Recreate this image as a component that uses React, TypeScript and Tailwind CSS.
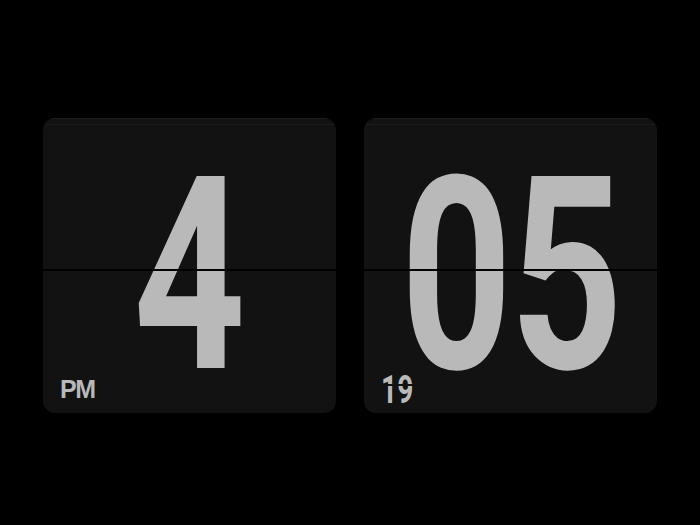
import React from 'react';

const digitFont = { fontFamily: 'Roboto, "DejaVu Sans", sans-serif' };

// each glyph sits in a box of its own width, squeezed to the condensed face
const Digit = ({ ch, box, squeeze }: { ch: string; box: string; squeeze: string }) => (
  <div className={`flex justify-center ${box}`}>
    <span
      className={`inline-block font-bold text-[270px] leading-none text-[#b9b9b9] origin-center ${squeeze}`}
      style={digitFont}
    >
      {ch}
    </span>
  </div>
);

const FlipCard = ({ children, label }: { children: React.ReactNode; label: React.ReactNode }) => {
  return (
    <div className="relative w-[293px] h-[295px] rounded-[12px] bg-[#121212] overflow-hidden flex items-center justify-center gap-[18px] pt-[21px]">
      {/* stacked leaves at the top edge */}
      <div className="absolute inset-x-0 top-0 h-[8px] rounded-t-[12px] border-t border-[#1e1e1e]" />
      <div className="absolute inset-x-[2px] top-[6px] h-[1px] bg-[#1a1a1a]" />

      {children}

      {/* split between the two halves */}
      <div className="absolute inset-x-0 top-[151px] h-[2px] bg-black" />

      {label}
    </div>
  );
};

export default function App() {
  return (
    <div className="w-[700px] h-[525px] bg-black flex justify-center items-start gap-[28px] pt-[118px]">
      <FlipCard
        label={
          <span
            className="absolute left-[17px] bottom-[11px] font-bold text-[25px] leading-none text-[#b9b9b9] tracking-[-1.5px]"
            style={{ fontFamily: '"Liberation Sans", Arial, sans-serif' }}
          >
            PM
          </span>
        }
      >
        <Digit ch="4" box="w-[103px]" squeeze="scale-x-[0.725]" />
      </FlipCard>
      <FlipCard
        label={
          <div className="absolute left-[17px] bottom-[4px]">
            <span
              className="inline-block font-bold text-[38px] leading-none text-[#b9b9b9] scale-x-[0.74] origin-left"
              style={digitFont}
            >
              19
            </span>
            <div className="absolute inset-x-0 top-[13px] h-[2px] bg-[#121212]" />
          </div>
        }
      >
        <Digit ch="0" box="w-[93px]" squeeze="scale-x-[0.72]" />
        <Digit ch="5" box="w-[91px]" squeeze="scale-x-[0.73]" />
      </FlipCard>
    </div>
  );
}
